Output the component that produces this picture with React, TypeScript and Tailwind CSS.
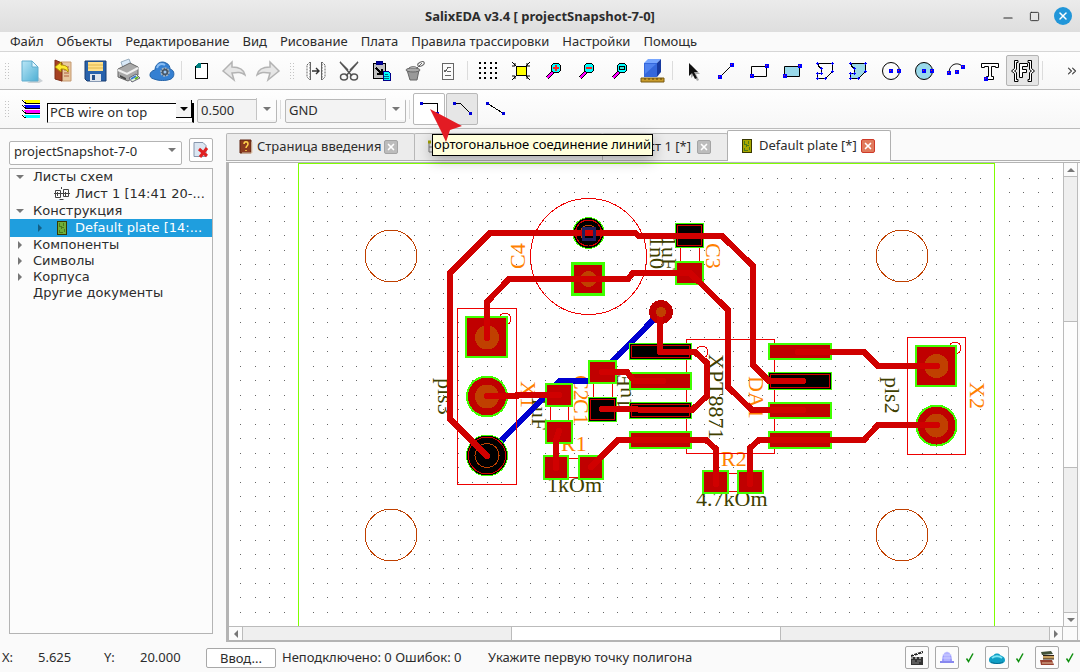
import { Fragment, type ReactNode } from "react";
import { ChevronsRight, Minus, Square, X } from "lucide-react";

const RED = "#d00000";
const PAD = "#c00000";
const LIME = "#40ff00";
const BROWN = "#c04000";

const menus = [
  "Файл",
  "Объекты",
  "Редактирование",
  "Вид",
  "Рисование",
  "Плата",
  "Правила трассировки",
  "Настройки",
  "Помощь",
];

/* ---------- toolbar icons, 24x24 ---------- */

const Node = ({ x, y }: { x: number; y: number }) => (
  <>
    <rect x={x - 2} y={y - 2} width="4" height="4" fill="#0000ff" />
    <rect x={x - 1} y={y - 1} width="1" height="1" fill="#e02040" />
  </>
);

const Lens = ({ children }: { children?: ReactNode }) => (
  <g shapeRendering="crispEdges">
    <path d="M5 19l6-6" stroke="#000" strokeWidth="4" />
    <path d="M5 19l6-6" stroke="#ff00ff" strokeWidth="2" />
    <circle cx="14" cy="9" r="5" fill="#00ffff" stroke="#000" />
    {children}
  </g>
);

const polyPath = "M4.500 4.500h15v8l-7 7h-8v-5h4v-5l-2-1z";
const polyNodes = [
  [4, 4],
  [19, 4],
  [19, 12],
  [12, 19],
  [4, 19],
  [4, 14],
  [8, 14],
  [8, 9],
];

const Poly = ({ fill }: { fill: string }) => (
  <g shapeRendering="crispEdges">
    <path d={polyPath} fill={fill} stroke="#000" />
    {polyNodes.map(([x, y]) => (
      <path key={`${x}-${y}`} d={`M${x - 1} ${y + 0.5}h3M${x + 0.5} ${y - 1}v3`} stroke="#0000ff" />
    ))}
  </g>
);

const icons: Record<string, ReactNode> = {
  new: (
    <>
      <path d="M20 18l5 4-4 2H9z" fill="#b9c2c7" opacity=".7" />
      <path d="M4 2h10l6 6v14H4z" fill="url(#sky)" stroke="#62adce" />
      <path d="M14 2v6h6z" fill="#e4f7ff" stroke="#62adce" />
    </>
  ),
  open: (
    <>
      <path d="M10 3h10v19H10z" fill="#e7c89f" stroke="#c59a72" />
      <path d="M13 8h5M13 11h5M13 14h5M13 17h5" stroke="#b06040" />
      <path d="M4 1l7 3v18l-7-2z" fill="#a64122" stroke="#7c2e18" />
      <path d="M4 8l6-5v3c5 0 8 2 7 7-2-3-4-3-7-3v3z" fill="#ffe92e" stroke="#a78b00" />
    </>
  ),
  save: (
    <>
      <path d="M1 2h21v20H3l-2-2z" fill="#2862ac" stroke="#183c70" />
      <path d="M4 3h15v9H4z" fill="#ffe08a" />
      <path d="M4 6h15M4 9h15" stroke="#dfb64a" />
      <path d="M6 15h11v7H6z" fill="#dfe5ed" />
      <path d="M8 16h3v5H8z" fill="#234e89" />
    </>
  ),
  print: (
    <>
      <path d="M4 3l8-3 2 5-8 4z" fill="#d9e9f8" stroke="#98adbf" />
      <path d="M1 10l12-6 8 4v8l-10 6-10-4z" fill="#a9a9a9" stroke="#666" />
      <path d="M1 11l9 4 11-6" fill="none" stroke="#efefef" strokeWidth="2" />
      <path d="M3 16l6 3v2l-6-3z" fill="#484848" />
      <path d="M12 19l7-4 4 4-8 4z" fill="#e6f5da" stroke="#667" />
      <path d="M14 20l5-3" stroke="#3478d0" strokeWidth="2" />
      <path d="M18 20l3-2" stroke="#60b620" strokeWidth="2" />
    </>
  ),
  cloud: (
    <>
      <path d="M4 20c-6-1-5-8 1-9 0-6 6-10 11-7 3 1 4 4 4 6 5 1 5 8 1 10-5 2-12 2-17 0z" fill="#3580d2" stroke="#2463a8" />
      <path d="M7 9c1-4 5-5 8-3" stroke="#8abef4" strokeWidth="2" fill="none" />
      <circle cx="15" cy="13" r="4" fill="#465565" stroke="#a3b4c4" strokeDasharray="2 1" strokeWidth="1.500" />
      <circle cx="15" cy="13" r="1.500" fill="#9dc8f4" />
    </>
  ),
  page: (
    <g shapeRendering="crispEdges">
      <path d="M8.500 4.500h9v15h-12v-12z" fill="#fff" stroke="#000" />
      <path d="M5.500 8.500v-2l3-3h2v5z" fill="#008080" />
    </g>
  ),
  undo: <path d="M0 12l9-9v5c8 0 12 3 13 8-4-3-7-3-13-2l2 7z" fill="#e6e6e6" stroke="#b3b3b3" strokeWidth="1.500" />,
  redo: <path d="M23 12l-9-9v5C6 8 2 11 1 16c4-3 7-3 13-2l-2 7z" fill="#e6e6e6" stroke="#b3b3b3" strokeWidth="1.500" />,
  split: (
    <g fill="none" stroke="#666">
      <path d="M3 6l3-3v18l-3-3zM21 6l-3-3v18l3-3z" fill="#fff" strokeDasharray="2 1" />
      <path d="M6.500 3v18M17.500 3v18" />
      <path d="M8 12h7M12 9l3 3-3 3" stroke="#333" strokeWidth="1.400" />
    </g>
  ),
  cut: (
    <g fill="none" stroke="#555" strokeWidth="1.500">
      <path d="M3 3l12 14M21 3L9 17M3 3l8 8M21 3l-8 8" />
      <ellipse cx="7" cy="18" rx="3.500" ry="3" />
      <ellipse cx="17" cy="18" rx="3.500" ry="3" />
    </g>
  ),
  paste: (
    <g shapeRendering="crispEdges">
      <path d="M3 4h12v15H3z" fill="#c0c0c0" stroke="#000" />
      <path d="M6 2h6v3H6z" fill="#0000a0" stroke="#000080" />
      <path d="M6 9l5 5M12 10v5H7" stroke="#000" strokeWidth="2" fill="none" />
      <path d="M13 12h5l2 2v7h-7z" fill="#00ffff" stroke="#008" />
      <path d="M15 15h3M14 17h5M14 19h5" stroke="#007080" />
    </g>
  ),
  erase: (
    <g fill="none" stroke="#666">
      <path d="M4 11h12l-2 10H7z" fill="#999" />
      <ellipse cx="10" cy="11" rx="7" ry="2" fill="#aaa" />
      <path d="M6 9c3-2 6-2 8 0" />
      <ellipse cx="18" cy="5" rx="3.500" ry="2" transform="rotate(-25 18 5)" />
      <path d="M14 9l5-5" />
    </g>
  ),
  list: (
    <g fill="none" stroke="#666" shapeRendering="crispEdges">
      <path d="M6 4h11v16H6z" />
      <path d="M11 8h4M11 12h4M9 16h6M8 11l1 2 3-4" />
    </g>
  ),
  grid: (
    <g fill="#000" shapeRendering="crispEdges">
      {[4, 9, 14, 19].flatMap((y) =>
        [3, 8, 14, 19].map((x) => <rect key={`${x}-${y}`} x={x} y={y - 1} width="2" height="2" />),
      )}
    </g>
  ),
  fit: (
    <g stroke="#000" fill="none">
      <path d="M7 7h10v9H7z" fill="#ffff00" shapeRendering="crispEdges" />
      <path d="M3 3l4 4M6 4v3H3M21 3l-4 4M18 4v3h3M3 21l4-4M6 20v-3H3M21 21l-4-4M18 20v-3h3" />
    </g>
  ),
  zoomIn: (
    <Lens>
      <path d="M14 6v6M11 9h6" stroke="#ff2020" strokeWidth="2" />
    </Lens>
  ),
  zoomOut: (
    <Lens>
      <path d="M11 9h6" stroke="#ff2020" strokeWidth="2" />
    </Lens>
  ),
  zoomRect: (
    <Lens>
      <path d="M11.500 7.500h5v3h-5z" stroke="#000" fill="#40e0d0" />
    </Lens>
  ),
  cube: (
    <>
      <path d="M3 4l4-4h13l-4 4z" fill="#77a6ff" />
      <path d="M3 4h13v14H3z" fill="#3467dc" />
      <path d="M16 4l4-4v13l-4 5z" fill="#173aa0" />
      <path d="M4 5h11L4 15z" fill="#4f82ef" />
      <path d="M0 19h23v4H0z" fill="#c99b2b" stroke="#795a12" />
      <path d="M4 19v2M8 19v2M12 19v2M16 19v2M20 19v2" stroke="#5b4209" />
    </>
  ),
  select: (
    <>
      <path d="M10 6v13l3-3 3 6 2-1-3-6h4z" fill="#aaa" />
      <path d="M8 4v13l3-3 3 6 2-1-3-6h4z" fill="#111" />
    </>
  ),
  line: (
    <>
      <path d="M6 18L18 6" stroke="#000" />
      <Node x={6} y={18} />
      <Node x={18} y={6} />
    </>
  ),
  rect: (
    <>
      <path d="M4.500 7.500h15v10h-15z" fill="none" stroke="#000" />
      <Node x={5} y={17} />
      <Node x={20} y={7} />
    </>
  ),
  rectFill: (
    <>
      <path d="M4.500 7.500h15v10h-15z" fill="#99d9ea" stroke="#000" />
      <Node x={5} y={17} />
      <Node x={20} y={7} />
    </>
  ),
  poly: <Poly fill="none" />,
  polyFill: <Poly fill="#99d9ea" />,
  circle: (
    <>
      <circle cx="12" cy="12" r="8.500" fill="none" stroke="#000" />
      <Node x={12} y={12} />
      <Node x={20} y={12} />
    </>
  ),
  circleFill: (
    <>
      <circle cx="12" cy="12" r="8.500" fill="#99d9ea" stroke="#000" />
      <Node x={12} y={12} />
      <Node x={20} y={12} />
    </>
  ),
  arc: (
    <>
      <path d="M4 14c0-9 9-12 14-6" fill="none" stroke="#000" />
      <Node x={4} y={14} />
      <Node x={12} y={13} />
      <Node x={18} y={8} />
    </>
  ),
  text: (
    <>
      <path d="M3.500 4.500h17v4h-3v-1h-4v10h2v3h-7v-3h2v-10h-4v1h-3z" fill="#fff" stroke="#000" />
      <Node x={8} y={20} />
    </>
  ),
  func: (
    <g fill="#fff" stroke="#000">
      <path d="M7 1.500H3.500v8l-3 2.500 3 2.500v8H7v-2H5.500v-7L3.500 12l2-1.500v-7H7zM17 1.500h3.500v8l3 2.500-3 2.500v8H17v-2h1.500v-7l2-1.500-2-1.500v-7H17z" />
      <path d="M8.500 4.500h8v3h-5v3h4v3h-4v5h-3z" />
    </g>
  ),
};

const Icon = ({ name }: { name: string }) => (
  <svg viewBox="0 0 24 24" className="size-6 shrink-0 overflow-visible" fill="none" aria-hidden="true">
    {icons[name]}
  </svg>
);

const Handle = ({ className = "" }: { className?: string }) => (
  <div className={`flex shrink-0 items-center justify-center ${className}`}>
    <div className="h-[18px] w-[5px] bg-[radial-gradient(#c4c4c4_1px,transparent_1px)] bg-[size:3px_3px]" />
  </div>
);

const Separator = () => (
  <div className="flex w-[7px] shrink-0 justify-center">
    <div className="h-[19px] w-px bg-[#dcdcdc]" />
  </div>
);

const groups: [string, string][][] = [
  [["new", "Создать"], ["open", "Открыть"], ["save", "Сохранить"], ["print", "Печать"], ["cloud", "Облако"]],
  [["page", "Лист"], ["undo", "Отменить"], ["redo", "Повторить"]],
  [["split", "Отразить"], ["cut", "Вырезать"], ["paste", "Вставить"], ["erase", "Удалить"], ["list", "Свойства"]],
  [["grid", "Сетка"], ["fit", "Вписать"], ["zoomIn", "Увеличить"], ["zoomOut", "Уменьшить"], ["zoomRect", "Область"], ["cube", "3D вид"]],
  [
    ["select", "Выбор"],
    ["line", "Линия"],
    ["rect", "Прямоугольник"],
    ["rectFill", "Залитый прямоугольник"],
    ["poly", "Полигон"],
    ["polyFill", "Залитый полигон"],
    ["circle", "Окружность"],
    ["circleFill", "Круг"],
    ["arc", "Дуга"],
    ["text", "Текст"],
    ["func", "Функция"],
  ],
];

const MainToolbar = () => (
  <div className="flex h-[39px] shrink-0 items-center border-y border-t-[#d6d6d6] border-b-[#bcbcbc] bg-linear-to-b from-[#fefefe] to-[#f7f7f7]">
    <Handle className="w-[13px]" />
    {groups.map((group, i) => (
      <Fragment key={i}>
        {i === 2 ? <Handle className="w-[15px]" /> : i > 0 && <Separator />}
        {group.map(([name, label]) => (
          <button
            key={name}
            type="button"
            aria-label={label}
            className={`flex h-[31px] w-[33px] shrink-0 items-center justify-center ${
              name === "func" ? "rounded-xs border border-[#b4b4b4] bg-[#e6e6e6]" : ""
            }`}
          >
            <Icon name={name} />
          </button>
        ))}
      </Fragment>
    ))}
    <Separator />
    <button type="button" aria-label="Ещё" className="ml-auto mr-px text-[#444]">
      <ChevronsRight size={14} />
    </button>
  </div>
);

const Arrow = () => <span className="border-x-4 border-t-4 border-x-transparent border-t-[#777]" />;

const Combo = ({ label, value, className }: { label: string; value: string; className: string }) => (
  <div className={`relative h-6 shrink-0 ${className}`}>
    <select
      aria-label={label}
      className="h-full w-full appearance-none rounded-xs border border-[#b8b8b8] bg-[#f3f3f3] pl-[3px] text-[13px] outline-none"
    >
      <option>{value}</option>
    </select>
    <span className="pointer-events-none absolute inset-y-px right-px flex w-5 items-center justify-center border-l border-[#c4c4c4] bg-[#fcfcfc]">
      <Arrow />
    </span>
  </div>
);

const WireIcon = ({ points }: { points: string }) => {
  const [first, last] = [points.split(" ")[0], points.split(" ").slice(-1)[0]].map((p) => p.split(",").map(Number));
  return (
    <svg viewBox="0 0 24 24" className="size-6" shapeRendering="crispEdges" aria-hidden="true">
      <polyline points={points} fill="none" stroke="#000" />
      {[first, last].map(([x, y]) => (
        <rect key={x} x={x - 1.5} y={y - 1.5} width="3" height="3" fill="#0000d8" />
      ))}
    </svg>
  );
};

const WireToolbar = () => (
  <div className="flex h-[39px] shrink-0 items-center border-b border-[#bcbcbc] bg-linear-to-b from-[#fefefe] to-[#f7f7f7]">
    <Handle className="w-[13px]" />
    <svg viewBox="0 0 18 18" className="mr-[7px] ml-[9px] size-[18px] shrink-0" shapeRendering="crispEdges" aria-hidden="true">
      {["#ffff00", "#0000ff", "#ff00ff", "#00ffff"].map((color, i) => (
        <g key={color}>
          <path d={`M1 ${i * 5}h17v3H5z`} fill={color} />
          <path d={`M0 ${i * 5}l4 3.500h14`} stroke="#000" fill="none" />
        </g>
      ))}
    </svg>
    <div className="relative mr-[3px] h-5 w-[147px] shrink-0">
      <select
        aria-label="Слой"
        className="h-full w-full appearance-none border border-r-2 border-black border-b-[#ddd] bg-white pb-[2px] pl-[2px] text-[13px] leading-4 outline-none"
      >
        <option>PCB wire on top</option>
      </select>
      <span className="pointer-events-none absolute inset-y-px right-[2px] flex w-4 items-center justify-center border-r border-b border-black bg-[#f4f4f4]">
        <span className="border-x-4 border-t-4 border-x-transparent border-t-black" />
      </span>
    </div>
    <Combo label="Ширина" value="0.500" className="w-20" />
    <Separator />
    <Combo label="Цепь" value="GND" className="ml-px w-[121px]" />
    <Separator />
    <div className="relative flex">
      <button
        type="button"
        aria-describedby="wire-tip"
        aria-label="Ортогональное"
        className="flex h-8 w-8 items-center justify-center rounded-xs border border-[#b8b8b8] bg-white"
      >
        <WireIcon points="4.500,6.500 20.500,6.500 20.500,16.500" />
      </button>
      <button
        type="button"
        aria-label="Под углом 45"
        className="ml-px flex h-8 w-8 items-center justify-center rounded-xs border border-[#b8b8b8] bg-[#e6e6e6]"
      >
        <WireIcon points="4.500,6.500 10.500,6.500 20.500,16.500" />
      </button>
      <button type="button" aria-label="Произвольное" className="ml-px flex h-8 w-8 items-center justify-center">
        <WireIcon points="4.500,6.500 20.500,16.500" />
      </button>
      <div
        id="wire-tip"
        role="tooltip"
        className="absolute top-[41px] left-[19px] z-10 flex h-[22px] w-[221px] items-center justify-center border border-black bg-[#ffffdc] text-[13px] whitespace-nowrap text-black shadow-[0_4px_14px_rgba(0,0,0,0.3)]"
      >
        ортогональное соединение линий
      </div>
      <svg viewBox="0 0 34 34" className="absolute top-4 left-4 z-20 size-[34px]" aria-hidden="true">
        <path d="M1 0l32 17-12 4-4 12-5-11z" fill="#e31b23" />
      </svg>
    </div>
  </div>
);

/* ---------- project dock ---------- */

const BoardIcon = ({ color = "#6fae3a" }: { color?: string }) => (
  <svg viewBox="0 0 12 15" className="h-[15px] w-3 shrink-0" shapeRendering="crispEdges" aria-hidden="true">
    <rect x="1" y="0.500" width="9" height="13" fill={color} stroke="#383800" />
    <path d="M3.500 2v3h2v3M7.500 2v3M5 6.500h3M3.500 9v2h3M8.500 8v3" stroke="#4a7a1c" fill="none" />
  </svg>
);

const SheetIcon = () => (
  <svg viewBox="0 0 16 14" className="h-[14px] w-4 shrink-0" fill="none" stroke="#444" aria-hidden="true">
    <path d="M1.500 3.500h5v7h-5zM9.500 2.500h5v7h-5zM0 6.500h16M7.500 0v2M3.500 5v4M11.500 5v4M5.500 12.500h4" />
  </svg>
);

type Row = { text: string; level: number; open?: boolean; leaf?: boolean; icon?: ReactNode; height: string; active?: boolean };

const rows: Row[] = [
  { text: "Листы схем", level: 0, open: true, height: "h-4" },
  { text: "Лист 1 [14:41 20-...", level: 1, leaf: true, icon: <SheetIcon />, height: "h-[17px]" },
  { text: "Конструкция", level: 0, open: true, height: "h-[17px]" },
  { text: "Default plate [14:...", level: 1, icon: <BoardIcon />, height: "h-[18px]", active: true },
  { text: "Компоненты", level: 0, height: "h-4" },
  { text: "Символы", level: 0, height: "h-4" },
  { text: "Корпуса", level: 0, height: "h-4" },
  { text: "Другие документы", level: 0, leaf: true, height: "h-4" },
];

const ProjectDock = () => (
  <aside className="flex w-[213px] shrink-0 flex-col gap-[6px] pt-[9px] pb-2 pl-[9px]">
    <div className="flex h-6 gap-[7px]">
      <div className="relative flex-1">
        <select
          aria-label="Проект"
          className="h-full w-full appearance-none rounded-xs border border-[#b4b4b4] bg-white pb-[2px] pl-1 text-[13px] outline-none"
        >
          <option>projectSnapshot-7-0</option>
        </select>
        <span className="pointer-events-none absolute inset-y-0 right-[6px] flex items-center">
          <Arrow />
        </span>
      </div>
      <button
        type="button"
        aria-label="Закрыть проект"
        className="flex w-6 items-center justify-center rounded-xs border border-[#b4b4b4] bg-white"
      >
        <svg viewBox="0 0 18 18" className="size-[18px] shrink-0" aria-hidden="true">
          <path d="M2 1.500h9l3 3v11H2z" fill="#dbe6f2" stroke="#8796ac" />
          <path d="M7 8l8 7M15 7l-7 9" stroke="#e02020" strokeWidth="3" />
        </svg>
      </button>
    </div>
    <ul role="tree" className="flex-1 border border-[#b4b4b4] bg-[#fcfcfc] font-['DejaVu_Sans',sans-serif] text-[13px]">
      {rows.map((row) => (
        <li
          key={row.text}
          role="treeitem"
          className={`flex items-center overflow-hidden whitespace-nowrap ${row.height} ${
            row.active ? "bg-[#1f9ede] text-white" : ""
          } ${row.level ? "pl-[25px]" : "pl-[5px]"}`}
        >
          <span className="flex w-[18px] shrink-0 items-center pl-px">
            {row.leaf ? null : row.open ? (
              <Arrow />
            ) : (
              <span
                className={`ml-[2px] border-y-4 border-l-4 border-y-transparent ${
                  row.active ? "border-l-[#135f86]" : "border-l-[#777]"
                }`}
              />
            )}
          </span>
          {row.icon && <span className="mr-[5px] flex w-[17px] shrink-0 justify-center">{row.icon}</span>}
          {row.text}
        </li>
      ))}
    </ul>
  </aside>
);

/* ---------- board ---------- */

const Pad = ({ x, y, w, h, dark }: { x: number; y: number; w: number; h: number; dark?: boolean }) =>
  dark ? (
    <>
      <rect x={x + 0.5} y={y + 0.5} width={w - 1} height={h - 1} fill="#000" stroke={LIME} />
      <rect x={x + 2.5} y={y + 2.5} width={w - 5} height={h - 5} fill="none" stroke={RED} />
    </>
  ) : (
    <rect x={x + 1} y={y + 1} width={w - 2} height={h - 2} fill={PAD} stroke={LIME} strokeWidth="2" />
  );

const Label = ({ x, y, turn = 0, note, children }: { x: number; y: number; turn?: number; note?: boolean; children: string }) => (
  <text transform={`translate(${x} ${y}) rotate(${turn})`} fill={note ? "#404000" : "#ff8000"}>
    {children}
  </text>
);

const dotColumns = Array.from({ length: 90 }, (_, i) => Math.floor(240.5 + i * 14.5));
const dotRows = Array.from({ length: 60 }, (_, i) => Math.floor(178 + i * 14.48));
const dots = dotRows.map((y) => dotColumns.map((x) => `M${x} ${y}h1v1h-1z`).join("")).join("");

const tracks = [
  "588,233 490,233 450,273 450,419 487,456",
  "588,233 635,233 639,236 722,236 753,266 753,365 769,381 803,381",
  "487,338 487,302 509,279 628,279 633,273 690,273 728,310 728,387 752,410 803,410",
  "660,312 660,352 695,352 707,363 707,396 692,410 640,410 636,409 602,409",
  "487,396 517,396 517,395 559,395",
  "559,431 556,440 556,468",
  "591,467 618,440 706,440 716,449 716,484",
  "602,372 627,372 634,381 663,381",
  "798,352 864,352 878,366 937,366",
  "750,484 750,448 759,440 864,440 878,425 937,425",
];

const Board = () => (
  <svg className="h-full w-full" fill="none" role="img" aria-label="Default plate">
    <g transform="translate(-229 -163)" shapeRendering="crispEdges">
      <path d={dots} fill="#666" />
      <path d="M298.500 2000V163.500H994.500V2000" stroke="#80ff00" />
      {[256, 535].flatMap((cy) =>
        [391, 902].map((cx) => <circle key={`${cx}-${cy}`} cx={cx} cy={cy} r="26" stroke={BROWN} />),
      )}

      <g className="font-['Liberation_Serif',serif] text-[22px]">
        <Label x={525} y={269} turn={-90}>C4</Label>
        <Label x={706} y={243} turn={90}>C3</Label>
        <Label x={438} y={378} turn={90} note>pls3</Label>
        <Label x={521} y={381} turn={90}>X1</Label>
        <Label x={574} y={375} turn={90}>C2</Label>
        <Label x={574} y={399} turn={90}>C1</Label>
        <Label x={532} y={396} turn={90} note>1uF</Label>
        <Label x={631} y={409} turn={-90} note>1uF</Label>
        <Label x={650} y={236} turn={90} note>1n0</Label>
        <Label x={662} y={236} turn={90} note>1uF</Label>
        <Label x={561} y={451}>R1</Label>
        <Label x={547} y={492} note>1kOm</Label>
        <Label x={721} y={466}>R2</Label>
        <Label x={696} y={506} note>4.7kOm</Label>
        <Label x={709} y={354} turn={90} note>XPT8871</Label>
        <Label x={749} y={376} turn={90}>DA1</Label>
        <Label x={885} y={377} turn={90} note>pls2</Label>
        <Label x={970} y={382} turn={90}>X2</Label>
      </g>

      <g stroke="#0000d0" strokeWidth="6">
        <path d="M661 312L602 372M602 381H560L487 455" />
      </g>

      <g stroke="#ee0000">
        <circle cx="588.500" cy="256.500" r="58" />
        <path d="M457.500 308.500h59v176h-59zM907.500 337.500h58v117h-58zM686.500 339.500h88v114h-88z" />
        <circle cx="505" cy="319" r="6" />
        <circle cx="955" cy="348" r="6" />
        <circle cx="702" cy="352" r="6" />
        <path d="M680.500 248v14M699.500 248v14M550.500 407v14M568.500 407v14M593.500 384v14M612.500 384v14" />
        <path d="M568 458.500h11M568 477.500h11M728 473.500h10M728 491.500h10" />
      </g>

      <circle cx="588.500" cy="233" r="15.500" fill="#000" stroke={LIME} />
      <circle cx="588.500" cy="233" r="13" stroke={RED} />
      <circle cx="588.500" cy="233" r="8" stroke={BROWN} />
      <rect x="572.500" y="263.500" width="31" height="31" fill={PAD} stroke={LIME} strokeWidth="3" />
      <circle cx="588.500" cy="279" r="8" fill={BROWN} />
      <Pad x={675} y={223} w={29} h={25} dark />
      <Pad x={675} y={261} w={29} h={24} />

      <Pad x={465} y={316} w={43} h={42} />
      <circle cx="487" cy="337.500" r="12" fill={BROWN} />
      <circle cx="487" cy="396.500" r="20" fill={PAD} stroke={LIME} strokeWidth="2" />
      <circle cx="487" cy="396.500" r="12" fill={BROWN} />
      <circle cx="487" cy="455.500" r="20.500" fill="#000" stroke={LIME} />
      <circle cx="487" cy="455.500" r="18.500" stroke={RED} />
      <circle cx="487" cy="455.500" r="12" stroke={BROWN} />

      <Pad x={545} y={383} w={28} h={24} />
      <Pad x={545} y={420} w={28} h={24} />
      <Pad x={588} y={360} w={29} h={24} />
      <Pad x={588} y={397} w={29} h={25} dark />
      <Pad x={543} y={455} w={26} h={25} />
      <Pad x={578} y={455} w={26} h={25} />
      <Pad x={702} y={470} w={27} h={24} />
      <Pad x={737} y={470} w={27} h={24} />

      <Pad x={629} y={343} w={63} h={17} dark />
      <Pad x={629} y={372} w={63} h={18} />
      <Pad x={629} y={402} w={63} h={17} dark />
      <Pad x={629} y={431} w={63} h={18} />
      <Pad x={768} y={343} w={64} h={17} />
      <Pad x={768} y={372} w={64} h={18} dark />
      <Pad x={768} y={402} w={64} h={17} />
      <Pad x={768} y={431} w={64} h={18} />

      <Pad x={915} y={345} w={42} h={42} />
      <circle cx="936.500" cy="366" r="12" fill={BROWN} />
      <circle cx="936.500" cy="425.500" r="20" fill={PAD} stroke={LIME} strokeWidth="2" />
      <circle cx="936.500" cy="425.500" r="12" fill={BROWN} />

      <circle cx="661" cy="312" r="12" fill={PAD} />

      <g stroke={RED} strokeWidth="6" strokeLinejoin="round" strokeLinecap="round">
        {tracks.map((points) => (
          <polyline key={points} points={points} />
        ))}
      </g>
      <circle cx="661" cy="312" r="5" fill={BROWN} />
      <rect x="583" y="228" width="11" height="11" stroke="#202060" strokeWidth="3" />
    </g>
  </svg>
);

/* ---------- documents ---------- */

const CloseBox = ({ active }: { active?: boolean }) => (
  <button
    type="button"
    aria-label="Закрыть вкладку"
    className={`flex size-[14px] shrink-0 items-center justify-center rounded-xs border text-white ${
      active ? "border-[#cf3a28] bg-[#e07a5c]" : "border-[#a4a4a4] bg-[#bcbcbc]"
    }`}
  >
    <X size={10} strokeWidth={4} />
  </button>
);

const tabClass = "flex h-[27px] shrink-0 items-center rounded-t-xs border border-b-0 border-[#b8b8b8] bg-[#ececec]";

const ArrowButton = ({ label, shape, className }: { label: string; shape: string; className: string }) => (
  <button type="button" aria-label={label} className={`flex shrink-0 items-center justify-center bg-[#fbfbfb] ${className}`}>
    <span className={shape} />
  </button>
);

const Documents = () => (
  <main className="ml-[13px] flex min-w-0 flex-1 flex-col pt-[2px]">
    <div className="flex h-[30px] items-end border-b border-[#b0b0b0] text-[13px]">
      <div className={`${tabClass} w-[189px] pl-3`}>
        <svg viewBox="0 0 14 16" className="mr-1 h-4 w-[14px] shrink-0" aria-hidden="true">
          <path d="M1 1h11v13H1z" fill="#8c3b1e" stroke="#5f2510" />
          <path d="M3 14h10V3" stroke="#e3c9ad" fill="none" />
          <path d="M5 5c0-3 4-3 4 0 0 2-2 2-2 4M7 11v1" stroke="#ffd34d" strokeWidth="1.500" fill="none" />
        </svg>
        <span className="flex-1 whitespace-nowrap">Страница введения</span>
        <span className="mr-4">
          <CloseBox />
        </span>
      </div>
      <div className={`${tabClass} -ml-px w-[189px] pl-[11px]`}>
        <svg viewBox="0 0 16 16" className="size-4" fill="none" stroke="#777" aria-hidden="true">
          <path d="M3 3v10h4M3 8h4" />
          <path d="M2 3h3" stroke="#a0a000" strokeWidth="3" />
          <path d="M8 6h5v4H8zM8 12h5" />
        </svg>
      </div>
      <div className={`${tabClass} -ml-px w-[126px] justify-end`}>
        <span className="mr-[6px] whitespace-nowrap">Лист 1 [*]</span>
        <span className="mr-4">
          <CloseBox />
        </span>
      </div>
      <div className="relative -mb-px -ml-px flex h-[31px] w-[164px] shrink-0 items-center rounded-t-xs border border-b-0 border-[#b0b0b0] bg-white pl-[13px]">
        <BoardIcon color="#a8a800" />
        <span className="ml-[6px] flex-1 whitespace-nowrap">Default plate [*]</span>
        <span className="mr-[15px]">
          <CloseBox active />
        </span>
      </div>
    </div>
    <div className="mt-px flex min-h-0 flex-1 flex-col border-t border-b-2 border-l-[3px] border-[#b4b4b4]">
      <div className="flex min-h-0 flex-1">
        <div className="min-w-0 flex-1 bg-white">
          <Board />
        </div>
        <div className="mr-[2px] flex w-[15px] shrink-0 flex-col border-x border-[#bbb] bg-[#efefef]">
          <ArrowButton label="Вверх" className="h-[14px] border-b border-[#bbb]" shape="border-x-4 border-b-4 border-x-transparent border-b-[#777]" />
          <div className="flex-[145]" />
          <div className="flex-[147] border-y border-[#bbb] bg-[#fdfdfd]" />
          <div className="flex-[145]" />
          <ArrowButton label="Вниз" className="h-[14px] border-t border-[#bbb]" shape="border-x-4 border-t-4 border-x-transparent border-t-[#777]" />
        </div>
      </div>
      <div className="mr-[2px] flex h-[14px] shrink-0 border-t border-r border-[#bbb] bg-[#efefef]">
        <ArrowButton label="Влево" className="w-[14px] border-r border-[#bbb]" shape="border-y-4 border-r-4 border-y-transparent border-r-[#777]" />
        <div className="flex-[268]" />
        <div className="flex-[269] border-x border-[#bbb] bg-white" />
        <div className="flex-[268]" />
        <ArrowButton label="Вправо" className="w-[14px] border-x border-[#bbb]" shape="border-y-4 border-l-4 border-y-transparent border-l-[#777]" />
        <div className="w-[14px] bg-[#fbfbfb]" />
      </div>
    </div>
  </main>
);

/* ---------- status bar ---------- */

const StatusButton = ({ label, children }: { label: string; children: ReactNode }) => (
  <button
    type="button"
    aria-label={label}
    className="flex h-[23px] w-6 items-center justify-center rounded-xs border border-[#a8a8a8] bg-[#fcfcfc]"
  >
    <svg viewBox="0 0 16 16" className="size-4" aria-hidden="true">
      {children}
    </svg>
  </button>
);

const Check = () => (
  <svg viewBox="0 0 12 12" className="mr-[9px] ml-[5px] size-3" fill="none" aria-hidden="true">
    <path d="M2.500 6.500l2 3 4.500-8" stroke="#109010" strokeWidth="1.500" />
  </svg>
);

const StatusBar = () => (
  <footer className="flex h-[30px] shrink-0 items-center pt-px text-[13px] whitespace-nowrap">
    <span className="w-[38px] pl-[2px]">X:</span>
    <span className="w-[66px]">5.625</span>
    <span className="w-9">Y:</span>
    <span className="w-[66px]">20.000</span>
    <button type="button" className="mr-[6px] h-5 w-[70px] rounded-xs border border-[#a8a8a8] bg-white leading-4">
      Ввод...
    </button>
    <span className="w-[206px]">Неподключено: 0 Ошибок: 0</span>
    <span>Укажите первую точку полигона</span>
    <div className="-mr-[5px] ml-auto flex items-center">
      <StatusButton label="Запись">
        <path d="M2 7h12v8H2z" fill="#333" />
        <path d="M2 5l12-4v2L2 7z" fill="#222" />
        <path d="M4 4l2 2M8 3l2 2M12 2l1 1" stroke="#fff" />
        <path d="M2 8h12" stroke="#fff" strokeDasharray="2 2" />
        <path d="M3 11h3M8 11h4M3 13h7" stroke="#888" />
      </StatusButton>
      <span className="w-[6px]" />
      <StatusButton label="Сервер">
        <path d="M3 11c0-12 10-12 10 0z" fill="#9a9aff" />
        <path d="M3 8h10M3 5h10M6 2v9M10 2v9M8 1v10" stroke="#dcdcff" strokeWidth=".7" />
        <path d="M1 11h14v2H1z" fill="#8888ee" />
      </StatusButton>
      <Check />
      <StatusButton label="Облако">
        <path d="M0 10c0-3 3-4 5-5 0-2 6-2 6 0 2 1 5 2 5 5 0 3-3 4-8 4s-8-1-8-4z" fill="#109fc5" />
        <path d="M3 8c3-2 7-2 10 0" stroke="#7de5f5" strokeWidth="2" fill="none" />
        <path d="M2 12c4 2 8 2 12 0" stroke="#08698e" fill="none" />
      </StatusButton>
      <Check />
      <StatusButton label="Библиотека">
        <path d="M2 2l10-1 2 3-11 1z" fill="#415138" />
        <path d="M4 6h11v3H4z" fill="#c8a05e" />
        <path d="M4 5.500h11M4 9h11" stroke="#2b2016" />
        <path d="M1 10h12l2 5H2z" fill="#97402f" />
        <path d="M3 13h11" stroke="#e2c3a2" />
      </StatusButton>
      <Check />
    </div>
  </footer>
);

const App = () => (
  <div className="flex h-screen flex-col overflow-hidden bg-[#fafafa] font-['Noto_Sans','Liberation_Sans',sans-serif] text-[#2c2c2c]">
    <svg className="absolute size-0" aria-hidden="true">
      <defs>
        <linearGradient id="sky" x2="1" y2="1">
          <stop stopColor="#b9e6f6" />
          <stop offset="1" stopColor="#4eafd4" />
        </linearGradient>
      </defs>
    </svg>
    <header className="relative flex h-8 shrink-0 items-center justify-center bg-linear-to-b from-[#ebebeb] to-[#dedede] pt-px">
      <h1 className="text-[13px] font-bold">SalixEDA v3.4 [ projectSnapshot-7-0]</h1>
      <div className="absolute inset-y-0 right-2 flex items-center gap-[14px]">
        <button type="button" aria-label="Свернуть" className="mt-1">
          <Minus size={14} />
        </button>
        <button type="button" aria-label="Развернуть">
          <Square size={11} strokeWidth={2} />
        </button>
        <button
          type="button"
          aria-label="Закрыть"
          className="flex size-[18px] items-center justify-center rounded-full bg-[#2196d9] text-white"
        >
          <X size={12} strokeWidth={3} />
        </button>
      </div>
    </header>
    <nav className="flex h-[19px] shrink-0 items-center gap-[13px] pl-[10px] text-[13px]">
      {menus.map((menu) => (
        <button key={menu} type="button" className="whitespace-nowrap">
          {menu}
        </button>
      ))}
    </nav>
    <MainToolbar />
    <WireToolbar />
    <div className="flex min-h-0 flex-1">
      <ProjectDock />
      <Documents />
    </div>
    <StatusBar />
  </div>
);

export default App;
